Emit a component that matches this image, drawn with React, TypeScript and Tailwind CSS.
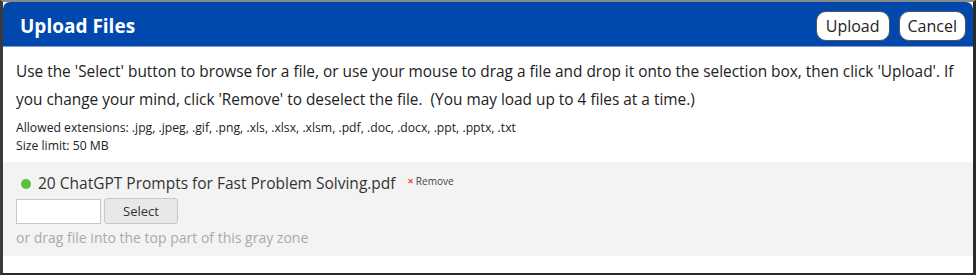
export default function App() {
  return (
    <div className="h-[276px] w-[977px] bg-white" style={{ fontFamily: '"Open Sans", "Noto Sans", sans-serif' }}>
      <div className="h-[275px] w-[976px] border-t-2 border-r-[3px] border-b-2 border-l-[3px] border-t-[#8a8a8a] border-r-[#2a2a2a] border-b-[#2a2a2a] border-l-[#3a3a3a] bg-white">
        <div className="flex h-[45px] items-center justify-between rounded-t-[7px] border-b border-[#7d9fd6] bg-[#0148ad] pr-[7px] pl-[17px]">
          <h1 className="pt-[5px] text-[19px] font-bold text-white">Upload Files</h1>
          <div className="flex gap-[9px] pt-[3px]">
            <button className="h-[30px] rounded-[10px] border border-[#555] bg-white px-[9px] text-[16px] text-[#222]">
              Upload
            </button>
            <button className="h-[30px] rounded-[10px] border border-[#555] bg-white px-[8px] text-[16px] text-[#222]">
              Cancel
            </button>
          </div>
        </div>

        <div className="px-[13px] pt-[11px] pb-[7px] text-[#222]">
          <p className="text-[15.4px] leading-[28px]">
            Use the 'Select' button to browse for a file, or use your mouse to drag a file and drop it onto the
            selection box, then click 'Upload'. If you change your mind, click 'Remove' to deselect the file.&nbsp; (You
            may load up to 4 files at a time.)
          </p>
          <div className="mt-[5px] text-[12.2px] leading-[18px]">
            <p>Allowed extensions: .jpg, .jpeg, .gif, .png, .xls, .xlsx, .xlsm, .pdf, .doc, .docx, .ppt, .pptx, .txt</p>
            <p>Size limit: 50 MB</p>
          </div>
        </div>

        <div className="bg-[#f3f3f3] px-[13px] pt-[10px] pb-[6px]">
          <div className="flex items-center">
            <span className="ml-[5px] h-[10px] w-[10px] rounded-full bg-[#5bc236]" />
            <span className="ml-[7px] text-[15.5px] text-[#333]">20 ChatGPT Prompts for Fast Problem Solving.pdf</span>
            <span className="ml-[12px] -mt-[4px] flex items-center text-[10px] text-[#444]">
              <span className="mr-[2px] text-[11px] font-bold text-[#f04a1e]">×</span>
              Remove
            </span>
          </div>
          <div className="mt-[3px] flex items-center gap-[3px]">
            <input className="h-[25px] w-[85px] border border-[#c8c8c8] bg-white" />
            <button className="h-[26px] w-[74px] rounded-[3px] border border-[#c8c8c8] bg-[#e8e8e8] text-[13px] text-[#333]">
              Select
            </button>
          </div>
          <p className="mt-[2px] text-[14px] leading-[24px] text-[#aaa]">or drag file into the top part of this gray zone</p>
        </div>
      </div>
    </div>
  );
}
